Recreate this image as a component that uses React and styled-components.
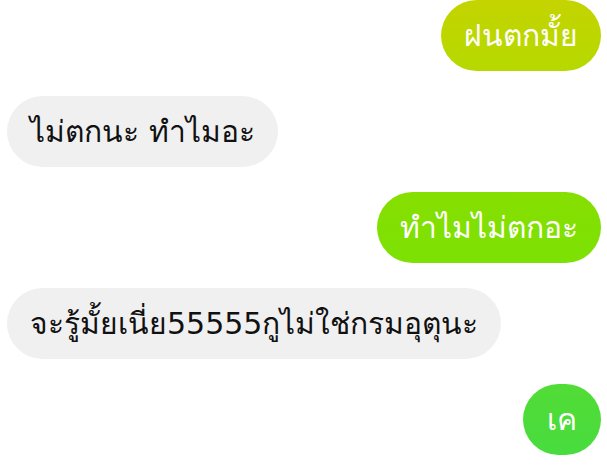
import React from 'react'
import styled, { createGlobalStyle } from 'styled-components'

const GlobalStyle = createGlobalStyle`
  html, body {
    margin: 0;
    padding: 0;
    background: #ffffff;
  }
  body {
    font-family: 'DejaVu Sans', sans-serif;
  }
`

const Thread = styled.div`
  display: flex;
  flex-direction: column;
  gap: 25px;
  padding: 0 6px 0 7px;
  width: 607px;
  height: 466px;
  box-sizing: border-box;
  overflow: hidden;
`

const Row = styled.div`
  display: flex;
  justify-content: ${(p) => (p.mine ? 'flex-end' : 'flex-start')};
`

const Bubble = styled.div`
  height: 71px;
  min-width: 78px;
  box-sizing: border-box;
  padding: 0 23px;
  display: flex;
  align-items: center;
  justify-content: center;
  border-radius: 36px;
  font-size: 30px;
  line-height: 1;
  white-space: nowrap;
  color: ${(p) => (p.mine ? '#ffffff' : '#111111')};
  background: ${(p) => p.bg || '#f0f0f0'};
`

const messages = [
  { text: 'ฝนตกมั้ย', mine: true, bg: 'linear-gradient(180deg, #c4d400 0%, #b6d900 100%)' },
  { text: 'ไม่ตกนะ ทำไมอะ' },
  { text: 'ทำไมไม่ตกอะ', mine: true, bg: 'linear-gradient(180deg, #86df00 0%, #7ce104 100%)' },
  { text: 'จะรู้มั้ยเนี่ย55555กูไม่ใช่กรมอุตุนะ' },
  { text: 'เค', mine: true, bg: 'linear-gradient(180deg, #52dc36 0%, #48dc3e 100%)' },
]

const App = () => {
  return (
    <>
      <GlobalStyle />
      <Thread>
        {messages.map((m, i) => (
          <Row key={i} mine={m.mine}>
            <Bubble mine={m.mine} bg={m.bg}>
              {m.text}
            </Bubble>
          </Row>
        ))}
      </Thread>
    </>
  )
}

export default App
